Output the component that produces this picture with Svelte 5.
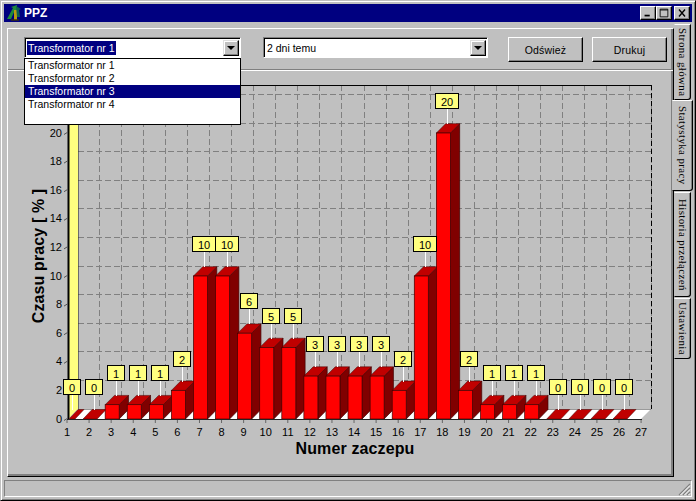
<script>
  const vals = [0,0,1,1,1,2,10,10,6,5,5,3,3,3,3,2,10,20,2,1,1,1,0,0,0,0];
  const items = ['Transformator nr 1','Transformator nr 2','Transformator nr 3','Transformator nr 4'];
  const tabs = [
    { label: 'Strona główna', cls: 'h1' },
    { label: 'Statystyka pracy', cls: 'h2 active' },
    { label: 'Historia przełączeń', cls: 'h3' },
    { label: 'Ustawienia', cls: 'h4' }
  ];
  const step = 22.08, unit = 14.3, x0 = 67, y0 = 419, depth = 9.3;
  const tick = (i) => x0 + i * step;
  const hLines = Array.from({ length: 12 }, (_, i) => 409 - i * 2 * unit).filter((y) => y > 86);
  const vLines = Array.from({ length: 26 }, (_, i) => 78 + (i + 1) * step - 1);
  const yLabels = Array.from({ length: 11 }, (_, i) => i * 2);
  const xLabels = Array.from({ length: 27 }, (_, i) => i + 1);
  const bars = vals.map((v, i) => {
    const l = Math.max(tick(i) - 6, 69);
    const r = tick(i) + 8;
    const t = y0 - v * unit;
    const stemX = Math.round(tick(i) + 5) + 0.5;
    const boxW = v >= 10 ? 23 : 17;
    const boxBottom = Math.round(t - depth - 14.5);
    return { v, i, l, r, t, stemX, boxW, boxBottom };
  });
  const pts = (a) => a.map((p) => p.join(',')).join(' ');
</script>

<div class="window">
  <div class="title">
    <svg class="appicon" viewBox="0 0 16 16" width="16" height="16">
      <path d="M1 14L7 3L5 2L11 0L11 6L9 5L5 14Z" fill="#1f8a3a"/>
      <path d="M8 15V5H11V15Z" fill="#b89a10"/>
      <path d="M10 1L15 4L13 5L14 12L11 12Z" fill="#0f5f50"/>
      <path d="M5 15h8" stroke="#3a3208" stroke-width="1.4"/>
    </svg>
    <span class="caption">PPZ</span>
    <div class="caps">
      <span class="cap"><svg viewBox="0 0 14 14" width="14" height="12"><rect x="3" y="9" width="6" height="2" fill="#000"/></svg></span>
      <span class="cap"><svg viewBox="0 0 14 14" width="14" height="12"><path d="M2.5 2.5h9v9h-9zM2.5 3.5h9" fill="none" stroke="#000"/></svg></span>
      <span class="cap close"><svg viewBox="0 0 14 14" width="14" height="12"><path d="M3.5 3L10.5 11M10.5 3L3.5 11" stroke="#000" stroke-width="1.6"/></svg></span>
    </div>
  </div>

  <div class="body">
    <div class="page">
      <div class="controls">
        <div class="combo first">
          <span class="value selected">Transformator nr 1</span>
          <span class="drop"><i></i></span>
        </div>
        <div class="combo second">
          <span class="value">2 dni temu</span>
          <span class="drop"><i></i></span>
        </div>
        <button class="btn refresh">Odśwież</button>
        <button class="btn">Drukuj</button>
      </div>
      <div class="rule"></div>

      <svg class="chart" viewBox="8 71 663 400" width="663" height="400">
        <g class="grid">
          {#each hLines as y}<line x1="78" x2="651" y1={y} y2={y}/>{/each}
          {#each vLines as x}<line x1={x} x2={x} y1="85" y2="409"/>{/each}
        </g>
        <line x1="78" x2="651.5" y1="85.5" y2="85.5" stroke="#000"/>
        <line x1="651.5" x2="651.5" y1="85" y2="409" stroke="#000" stroke-dasharray="5 3"/>

        <polygon points={pts([[68,96],[78,86],[78,409],[68,419]])} fill="#ffff80"/>
        <line x1="68.5" x2="68.5" y1="94" y2="419" stroke="#000" stroke-width="2"/>
        <line x1="78.5" x2="78.5" y1="85" y2="409" stroke="#333" stroke-width="0.6"/>

        <polygon points={pts([[69,419],[641,419],[651,409],[78,409]])} fill="#fff"/>
        <line x1="78" x2="651" y1="409.5" y2="409.5" stroke="#555" stroke-width="0.6"/>

        {#each yLabels as n}
          <line x1="64" x2="68" y1={y0 - n * unit + 1.5} y2={y0 - n * unit - 1} stroke="#555"/>
          <text class="tick" x="62" y={y0 - n * unit + 3.5} text-anchor="end">{n}</text>
        {/each}

        {#each bars as b}
          {#if b.v === 0}
            <polygon class="top" points={pts([[b.l,419],[b.r,419],[b.r+9,409.5],[Math.max(b.l+9,78),409.5]])}/>
          {:else}
            <polygon class="side" points={pts([[b.r,419],[b.r+depth,409.5],[b.r+depth,b.t-depth],[b.r,b.t]])}/>
            <polygon class="top" points={pts([[b.l,b.t],[b.r,b.t],[b.r+depth,b.t-depth],[b.l+depth,b.t-depth]])}/>
            <rect class="front" x={b.l} y={b.t} width={b.r-b.l} height={y0-b.t}/>
          {/if}
        {/each}

        <line x1="67" x2="642" y1="419.5" y2="419.5" stroke="#222"/>

        {#each xLabels as n, i}
          <line x1={tick(i)} x2={tick(i)} y1="420" y2="423" stroke="#666"/>
          <text class="tick" x={tick(i)} y="436" text-anchor="middle">{n}</text>
        {/each}

        {#each bars as b}
          <line x1={b.stemX} x2={b.stemX} y1={b.boxBottom} y2={b.boxBottom + 15} stroke="#fff"/>
        {/each}
        {#each bars as b}
          <rect class="lab" x={Math.round(b.stemX - b.boxW / 2) - 0.5} y={b.boxBottom - 15.5} width={b.boxW} height="15"/>
          <text class="tick" x={b.stemX - 0.5} y={b.boxBottom - 3.5} text-anchor="middle">{b.v}</text>
        {/each}

        <text class="axis" x="355" y="454" text-anchor="middle">Numer zaczepu</text>
        <text class="axis" transform="translate(44 256) rotate(-90)" text-anchor="middle">Czasu pracy  [ % ]</text>
      </svg>

      <div class="list">
        {#each items as it, i}
          <div class="item" class:on={i === 2}>{it}</div>
        {/each}
      </div>
    </div>

    <div class="tabs">
      {#each tabs as t}
        <div class="tab {t.cls}"><span>{t.label}</span></div>
      {/each}
    </div>
  </div>

  <div class="status">
    <svg class="grip" viewBox="0 0 14 14" width="14" height="14">
      <path d="M13 2L2 13M13 6L6 13M13 10L10 13" stroke="#808080" stroke-width="1.2"/>
      <path d="M13 3.5L3.5 13M13 7.5L7.5 13M13 11.5L11.5 13" stroke="#fff"/>
    </svg>
  </div>
</div>

<style>
  :global(body) { margin: 0; background: #c0c0c0; }
  .window {
    position: relative;
    width: 696px; height: 501px;
    box-sizing: border-box;
    background: #c0c0c0;
    border: 1px solid;
    border-color: #c0c0c0 #000 #000 #c0c0c0;
    box-shadow: inset 1px 1px #fff, inset -1px -1px #808080;
    padding: 3px;
    font-family: "Liberation Sans", Arial, sans-serif;
    font-size: 10.5px;
    color: #000;
    overflow: hidden;
  }
  .title {
    height: 18px;
    background: #000080;
    display: flex;
    align-items: center;
    padding: 0 2px;
  }
  .appicon { flex: none; }
  .caption { color: #fff; font-weight: bold; font-size: 12px; margin-left: 2px; }
  .caps { margin-left: auto; display: flex; align-items: center; }
  .cap {
    width: 16px; height: 14px; box-sizing: border-box;
    background: #c0c0c0;
    border: 1px solid; border-color: #fff #000 #000 #fff;
    box-shadow: inset -1px -1px #808080;
    display: flex; align-items: center; justify-content: center;
    overflow: hidden;
  }
  .cap svg { flex: none; }
  .close { margin-left: 2px; }

  .body { display: flex; height: 456px; margin-top: 1px; }
  .page {
    position: relative;
    margin: 5px 0 0 3px;
    width: 667px; height: 449px;
    box-sizing: border-box;
    border: 1px solid;
    border-color: #fff #000 #000 #fff;
    box-shadow: inset -1px -1px #808080, inset -2px -2px #808080;
  }
  .controls { height: 40px; position: relative; display: flex; padding: 8px 0 0 16px; box-sizing: border-box; }
  .combo {
    position: relative;
    height: 21px; box-sizing: border-box;
    background: #fff;
    border: 1px solid; border-color: #808080 #fff #fff #808080;
    box-shadow: inset 1px 1px #000;
    display: flex; align-items: center;
    padding-left: 2px;
  }
  .first { width: 217px; }
  .second { width: 225px; margin-left: 22px; }
  .value { line-height: 14px; padding: 0 1px; }
  .selected { background: #000080; color: #fff; }
  .drop {
    position: absolute; right: 1px; top: 2px;
    width: 16px; height: 16px; box-sizing: border-box;
    background: #c0c0c0;
    border: 1px solid; border-color: #dfdfdf #000 #000 #dfdfdf;
    box-shadow: inset -1px -1px #808080, inset 1px 1px #fff;
    display: flex; align-items: center; justify-content: center;
  }
  .drop i {
    width: 0; height: 0;
    border-left: 4px solid transparent; border-right: 4px solid transparent;
    border-top: 4px solid #000;
  }
  .btn {
    width: 75px; height: 25px; box-sizing: border-box;
    background: #c0c0c0;
    border: 1px solid; border-color: #fff #000 #000 #fff;
    box-shadow: inset -1px -1px #808080;
    font: 10.5px "Liberation Sans", Arial, sans-serif;
    letter-spacing: 0.2px;
    color: #000;
    padding: 0;
    margin-left: 9px;
  }
  .refresh { margin-left: 20px; }
  .rule { height: 1px; background: #808080; border-bottom: 1px solid #fff; }
  .chart { display: block; }
  .grid line { stroke: #808080; stroke-dasharray: 6 3; stroke-width: 1; shape-rendering: crispEdges; }
  .front { fill: #ff0000; stroke: #400000; stroke-width: 0.7; }
  .side { fill: #800000; stroke: #400000; stroke-width: 0.7; }
  .top { fill: #c00000; stroke: #400000; stroke-width: 0.5; }
  .lab { fill: #ffff80; stroke: #000; stroke-width: 1; }
  .tick { font: 11px "Liberation Sans", Arial, sans-serif; fill: #000; }
  .axis { font: bold 16px "Liberation Sans", Arial, sans-serif; fill: #000; letter-spacing: 0.12px; }

  .list {
    position: absolute; left: 16px; top: 29px;
    width: 217px; height: 67px; box-sizing: border-box;
    background: #fff; border: 1px solid #000;
  }
  .item { height: 13px; line-height: 13px; padding-left: 3px; }
  .on { background: #000080; color: #fff; }

  .tabs { display: flex; flex-direction: column; margin-top: 1px; width: 18px; }
  .tab {
    position: relative;
    box-sizing: border-box;
    width: 17px;
    margin-bottom: 2px;
    border: 1px solid; border-color: #fff #000 #000 transparent;
    box-shadow: inset -1px 0 #808080;
    border-radius: 0 0 3px 0;
    background: #c0c0c0;
    display: flex; align-items: center; justify-content: center;
  }
  .tab span {
    writing-mode: vertical-rl;
    font: 11px "Liberation Serif", "Times New Roman", serif;
    letter-spacing: 0.35px;
    white-space: nowrap;
  }
  .h1 { height: 76px; margin-bottom: 0; }
  .h2 { height: 91px; margin-left: -2px; width: 21px; margin-bottom: 1px; }
  .h3 { height: 105px; margin-bottom: 1px; }
  .h4 { height: 61px; }
  .active { z-index: 2; }

  .status {
    position: relative;
    height: 17px; margin-top: 1px; box-sizing: border-box;
    border: 1px solid; border-color: #808080 #fff #fff #808080;
  }
  .grip { position: absolute; right: 0; bottom: 0; }
</style>
